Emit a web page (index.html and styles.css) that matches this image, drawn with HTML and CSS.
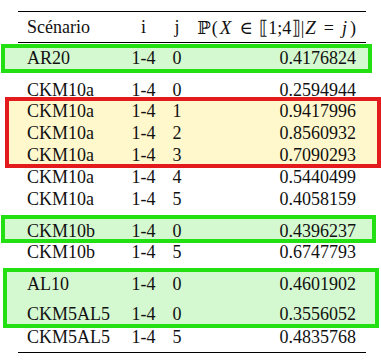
FILE: index.html
```html
<!DOCTYPE html>
<html>
<head>
<meta charset="utf-8">
<link rel="stylesheet" href="styles.css">
</head>
<body>
<div class="table">
  <div class="row head">
    <span class="c-name">Scénario</span><span class="c-i">i</span><span class="c-j">j</span>
    <span class="c-p"><span class="bb">ℙ</span>(<i class="mx">X</i><span class="op">∈</span><span class="br">⟦</span>1;4<span class="br">⟧</span>|<i class="mz">Z</i><span class="op">=</span><i class="mj">j</i>)</span>
  </div>

  <div class="box green b1">
    <div class="row h21"><span class="c-name">AR20</span><span class="c-i">1-4</span><span class="c-j">0</span><span class="c-p">0.4176824</span></div>
  </div>

  <div class="row r-pre"><span class="c-name">CKM10a</span><span class="c-i">1-4</span><span class="c-j">0</span><span class="c-p">0.2594944</span></div>

  <div class="box red b-red">
    <div class="row"><span class="c-name">CKM10a</span><span class="c-i">1-4</span><span class="c-j">1</span><span class="c-p">0.9417996</span></div>
    <div class="row"><span class="c-name">CKM10a</span><span class="c-i">1-4</span><span class="c-j">2</span><span class="c-p">0.8560932</span></div>
    <div class="row h19"><span class="c-name">CKM10a</span><span class="c-i">1-4</span><span class="c-j">3</span><span class="c-p">0.7090293</span></div>
  </div>

  <div class="row up1"><span class="c-name">CKM10a</span><span class="c-i">1-4</span><span class="c-j">4</span><span class="c-p">0.5440499</span></div>
  <div class="row"><span class="c-name">CKM10a</span><span class="c-i">1-4</span><span class="c-j">5</span><span class="c-p">0.4058159</span></div>

  <div class="box green b2">
    <div class="row h18"><span class="c-name">CKM10b</span><span class="c-i">1-4</span><span class="c-j">0</span><span class="c-p">0.4396237</span></div>
  </div>

  <div class="row up1"><span class="c-name">CKM10b</span><span class="c-i">1-4</span><span class="c-j">5</span><span class="c-p">0.6747793</span></div>

  <div class="box green b3">
    <div class="row h30"><span class="c-name">AL10</span><span class="c-i">1-4</span><span class="c-j">0</span><span class="c-p">0.4601902</span></div>
    <div class="row h20"><span class="c-name">CKM5AL5</span><span class="c-i">1-4</span><span class="c-j">0</span><span class="c-p">0.3556052</span></div>
  </div>

  <div class="row up1"><span class="c-name">CKM5AL5</span><span class="c-i">1-4</span><span class="c-j">5</span><span class="c-p">0.4835768</span></div>
</div>
</body>
</html>
```

FILE: styles.css
```css
html, body {
  margin: 0;
  padding: 0;
  background: #ffffff;
}

body {
  padding-top: 11px;
  font-family: "Liberation Serif", "DejaVu Serif", serif;
  font-size: 18px;
  color: #111111;
}

.table {
  margin-left: 18px;
  width: 348px;
  border-top: 1px solid #000;
  border-bottom: 1px solid #000;
  padding-bottom: 3px;
}

.row {
  display: grid;
  grid-template-columns: 100px 33px 34px 1fr;
  padding: 0 10px 0 9px;
  height: 22px;
  line-height: 20px;
  white-space: nowrap;
}

.c-name { text-align: left; }
.c-i { text-align: center; }
.c-j { text-align: center; }
.c-p { text-align: right; }

.head {
  height: 30px;
  line-height: 30px;
  border-bottom: 1px solid #000;
}

.bb {
  font-family: "DejaVu Serif", "DejaVu Sans", serif;
  font-size: 18px;
  margin-right: 1px;
}

.br {
  font-family: "DejaVu Sans", "DejaVu Serif", serif;
  font-size: 19px;
}

.op {
  margin: 0 6px;
}

.head i {
  font-style: italic;
}

.mx {
  font-size: 19px;
  margin: 0 2px 0 2px;
}

.mz {
  font-size: 19px;
  margin: 0 2px 0 1px;
}

.mj {
  margin: 0 3px 0 2px;
}

.box {
  border: 4px solid;
}

.green {
  border-color: #22e012;
  background: #d4f8cf;
}

.red {
  border-color: #e41b1d;
  background: #fff8cd;
}

.b1 {
  margin: 1px -6px 0 -17px;
  padding: 0 2px 0 13px;
}

.b-red {
  margin: 0 -15px 0 -13px;
  padding: 0 11px 0 9px;
}

.b2 {
  margin: 4px -10px 0 -17px;
  padding: 2px 6px 0 13px;
}

.b3 {
  margin: 4px -13px 0 -15px;
  padding: 2px 9px 0 11px;
}

.h21 { height: 21px; }
.h19 { height: 19px; }
.h18 { height: 18px; }
.h30 { height: 30px; }
.h20 { height: 20px; }

.r-pre {
  margin-top: 7px;
  height: 17px;
}

.up1 {
  margin-top: -1px;
}
```
